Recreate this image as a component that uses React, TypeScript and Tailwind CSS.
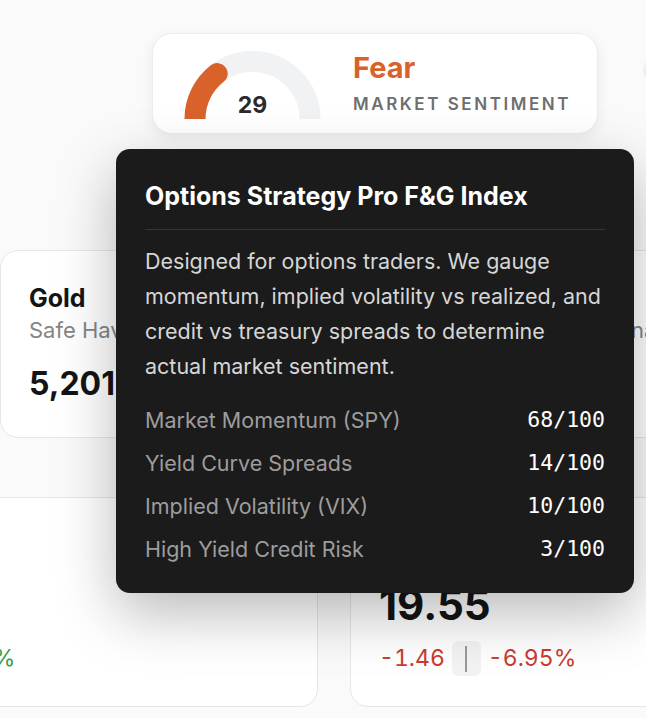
import React from "react";

const factors = [
  { label: "Market Momentum (SPY)", score: 68 },
  { label: "Yield Curve Spreads", score: 14 },
  { label: "Implied Volatility (VIX)", score: 10 },
  { label: "High Yield Credit Risk", score: 3 },
];

function Gauge({ value }: { value: number }) {
  const r = 57.5;
  const cx = 68.5;
  const cy = 69;
  const a = Math.PI - (value / 100) * Math.PI;
  const ex = cx + r * Math.cos(a);
  const ey = cy - r * Math.sin(a);
  return (
    <div className="relative h-[69px] w-[137px] shrink-0">
      <svg width="137" height="69" viewBox="0 0 137 69">
        <path d={`M ${cx - r} ${cy} A ${r} ${r} 0 0 1 ${cx + r} ${cy}`} fill="none" stroke="#f1f2f4" strokeWidth="21" />
        <path d={`M ${cx - r} ${cy + 12} L ${cx - r} ${cy} A ${r} ${r} 0 0 1 ${ex} ${ey}`} fill="none" stroke="#d9622b" strokeWidth="21" strokeLinecap="round" />
      </svg>
      <div className="absolute inset-x-0 bottom-[2px] text-center text-[23px] font-bold leading-none text-[#2b2b2b]">{value}</div>
    </div>
  );
}

function ChangeRow({ abs, pct, up }: { abs: string; pct: string; up?: boolean }) {
  const color = up ? "text-[#3d9b4a]" : "text-[#cc3a2f]";
  return (
    <div className={`flex items-center gap-[7px] text-[23px] leading-none tabular-nums ${color}`}>
      <span>{abs}</span>
      <span className="flex h-[35px] w-[29px] items-center justify-center rounded-md bg-[#f3f3f3]">
        <span className="h-[26px] w-[2px] bg-[#9a9a9a]" />
      </span>
      <span>{pct}</span>
    </div>
  );
}

function AssetCard({ name, sub, value }: { name: string; sub: string; value: string }) {
  return (
    <div className="h-[188px] w-[330px] shrink-0 rounded-[18px] border border-[#e6e6e6] bg-white px-[28px] pt-[33px]">
      <div className="text-[25px] font-bold leading-[28px] text-[#141414]">{name}</div>
      <div className="mt-[5px] whitespace-nowrap text-[22px] leading-[26px] text-[#858585]">{sub}</div>
      <div className="mt-[25px] text-[32px] font-bold leading-none text-[#141414]">{value}</div>
    </div>
  );
}

function IndexCard({ name, sub, value, abs, pct, up }: { name: string; sub: string; value: string; abs: string; pct: string; up?: boolean }) {
  return (
    <div className="h-[210px] w-[529px] shrink-0 rounded-[18px] border border-[#e6e6e6] bg-white px-[28px] pt-[28px]">
      <div className="text-[25px] font-bold leading-[28px] text-[#141414]">{name}</div>
      <div className="text-[22px] leading-[26px] text-[#858585]">{sub}</div>
      <div className="mt-[4px] text-[42px] font-bold leading-[42px] text-[#141414]">{value}</div>
      <div className="mt-[15px]">
        <ChangeRow abs={abs} pct={pct} up={up} />
      </div>
    </div>
  );
}

export default function App() {
  return (
    <div className="relative h-[718px] w-[646px] overflow-hidden bg-[#fafafa] font-['Inter',sans-serif]">
      {/* sentiment row */}
      <div className="flex items-start pl-[152px] pt-[33px]">
        <div className="flex h-[101px] w-[446px] shrink-0 items-start rounded-[20px] border border-[#ececec] bg-white shadow-[0_4px_14px_rgba(0,0,0,0.07)]">
          <div className="ml-[31px] mt-[16px]">
            <Gauge value={29} />
          </div>
          <div className="ml-[32px] mt-[19px]">
            <div className="text-[29px] font-bold leading-none text-[#d9622b]">Fear</div>
            <div className="mt-[14px] text-[17px] font-semibold uppercase leading-none tracking-[0.15em] text-[#6f6f6f]">Market Sentiment</div>
          </div>
        </div>
        <div className="ml-[45px] mt-[23px] h-[28px] w-[28px] shrink-0 rounded-full bg-[#efefef]" />
      </div>

      {/* asset cards */}
      <div className="mt-[116px] flex gap-[30px]">
        <AssetCard name="Gold" sub="Safe Haven" value="5,201.40" />
        <AssetCard name="Copper" sub="Industrial Demand · China" value="5.82" />
      </div>

      {/* index cards */}
      <div className="ml-[-211px] mt-[59px] flex gap-[32px]">
        <IndexCard name="S&P 500" sub="Large Cap" value="6,874" abs="+0.58" pct="+1.24%" up />
        <IndexCard name="VIX" sub="Volatility" value="19.55" abs="-1.46" pct="-6.95%" />
      </div>

      {/* tooltip */}
      <div className="absolute left-[116px] top-[149px] z-10 w-[518px] rounded-[14px] bg-[#1b1b1b] px-[29px] pb-[22px] pt-[32px] shadow-[0_20px_60px_rgba(0,0,0,0.28)]">
        <h3 className="text-[25px] font-bold leading-[30px] text-white">Options Strategy Pro F&amp;G Index</h3>
        <div className="mt-[18px] h-px bg-[#353535]" />
        <p className="mt-[14px] text-[21.5px] leading-[35px] text-[#d6d6d6]">
          Designed for options traders. We gauge momentum, implied volatility vs realized, and credit vs treasury spreads to determine actual market sentiment.
        </p>
        <div className="mt-[15px] flex flex-col">
          {factors.map((f) => (
            <div key={f.label} className="flex h-[43px] items-center justify-between">
              <span className="text-[21.5px] text-[#9d9d9d]">{f.label}</span>
              <span className="font-['DejaVu_Sans_Mono',monospace] text-[21.5px] text-white">{f.score}/100</span>
            </div>
          ))}
        </div>
      </div>
    </div>
  );
}
